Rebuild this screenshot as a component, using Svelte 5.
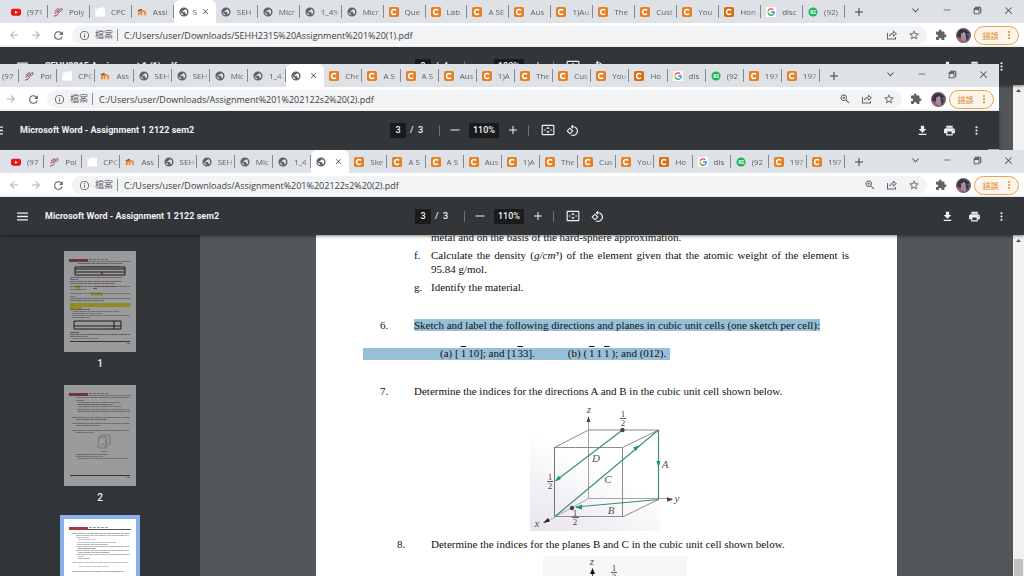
<script>
  const icons = {
    back: 'M20 11H7.83l5.59-5.59L12 4l-8 8 8 8 1.41-1.41L7.83 13H20z',
    forward: 'M4 11h12.17l-5.59-5.59L12 4l8 8-8 8-1.41-1.41L16.17 13H4z',
    reload: 'M17.65 6.35A7.96 7.96 0 0 0 12 4a8 8 0 1 0 7.73 10h-2.08A6 6 0 1 1 12 6c1.66 0 3.14.69 4.22 1.78L13 11h7V4z',
    info: 'M11 7h2v2h-2zm0 4h2v6h-2zm1-9a10 10 0 1 0 0 20 10 10 0 0 0 0-20zm0 18a8 8 0 1 1 0-16 8 8 0 0 1 0 16z',
    zoom: 'M15.5 14h-.79l-.28-.27A6.5 6.5 0 1 0 13.73 14.43l.27.28v.79l5 5L20.5 19zm-6 0a4.5 4.5 0 1 1 0-9 4.5 4.5 0 0 1 0 9zM10.3 7H8.7v1.7H7v1.6h1.7V12h1.6v-1.7H12V8.7h-1.7z',
    share: 'M2 8h2v11h14v-3h2v5H2zM14 3l8 6.5-8 6.5v-4c-4 0-6 1-8.5 4 .8-5 3.5-8.5 8.5-9zm1.5 3.5V8.500C11.500 8.700 9.500 10 8.300 12c2-1 4.200-1.300 7.200-1.300v2L19.500 9.500z',
    star: 'M22 9.24l-7.19-.62L12 2 9.19 8.63 2 9.24l5.46 4.73L5.82 21 12 17.27 18.18 21l-1.63-7.03zM12 15.4l-3.76 2.27 1-4.28-3.32-2.88 4.38-.38L12 6.1l1.71 4.04 4.38.38-3.32 2.88 1 4.28z',
    puzzle: 'M20.5 11H19V7c0-1.1-.9-2-2-2h-4V3.5a2.5 2.5 0 0 0-5 0V5H4c-1.1 0-1.99.9-1.99 2v3.8H3.5c1.49 0 2.7 1.21 2.7 2.7s-1.21 2.7-2.7 2.7H2V20c0 1.1.9 2 2 2h3.8v-1.5c0-1.49 1.21-2.7 2.7-2.7s2.7 1.21 2.7 2.7V22H17c1.1 0 2-.9 2-2v-4h1.5a2.5 2.5 0 0 0 0-5z',
    menu: 'M2 4.5h20v2.5H2zm0 6.2h20v2.5H2zm0 6.3h20v2.5H2z',
    minus: 'M3 11h18v2H3z',
    plus: 'M20 13h-7v7h-2v-7H4v-2h7V4h2v7h7z',
    fit: 'M3 3h18a2 2 0 0 1 2 2v14a2 2 0 0 1-2 2H3a2 2 0 0 1-2-2V5a2 2 0 0 1 2-2zm0 2v14h18V5zM12 6.5l3 3.5H9zM12 17.5L9 14h6zM5 11h3v2H5zm11 0h3v2h-3z',
    rotate: 'M7.34 6.41L.86 12.9l6.49 6.48 6.49-6.48zM3.69 12.9l3.66-3.66L11 12.9l-3.66 3.66zm15.67-6.26A8.95 8.95 0 0 0 13 4V.76L8.76 5 13 9.24V6a7 7 0 1 1-2.84 13.39l-1.49 1.49A9 9 0 0 0 19.36 6.64z',
    download: 'M19 9h-4V3H9v6H5l7 7zM5 18v2.5h14V18z',
    print: 'M19 8H5c-1.66 0-3 1.34-3 3v6h4v4h12v-4h4v-6c0-1.66-1.34-3-3-3zm-3 11H8v-5h8zm3-7a1 1 0 1 1 0-2 1 1 0 0 1 0 2zm-1-9H6v4h12z',
    more: 'M12 8a2 2 0 1 0 0-4 2 2 0 0 0 0 4zm0 2a2 2 0 1 0 0 4 2 2 0 0 0 0-4zm0 6a2 2 0 1 0 0 4 2 2 0 0 0 0-4z',
    chevron: 'M3 7.5L4.5 6l7.5 8 7.5-8L21 7.5l-9 9.5z',
    minimise: 'M2 11h20v2H2z',
    restore: 'M2 6h15v16H2zm2 4v10h11V10zM5 2h14l3 3v14h-2.5V4.5H5z',
    close: 'M21 4.4L19.6 3 12 10.6 4.4 3 3 4.4l7.6 7.6L3 19.6 4.4 21l7.6-7.6 7.6 7.6 1.4-1.4-7.6-7.6z',
    globe: 'M12 1a11 11 0 1 0 0 22 11 11 0 0 0 0-22zm-1 19c-4-.5-7-4-7-8l5 4v1c0 1 1 2 2 2zm7-2.5c-.3-.9-1-1.5-2-1.5h-1v-3c0-.6-.4-1-1-1H8v-2h2c.6 0 1-.4 1-1V7h2c1.1 0 2-.9 2-2v-.4c4 2 6.5 8 3 12.9z'
  };

  const start = [['yt', '(97'], ['poly', 'Pol'], ['doc', 'CPC'], ['moodle', 'Ass'], ['globe', 'SEH'], ['globe', 'SEH'], ['globe', 'Mic'], ['globe', '1_4'], ['globe', '']];
  const rest = [['c', 'A S'], ['c', 'A S'], ['c', 'Aus'], ['c', '1)A'], ['c', 'The'], ['c', 'Cus'], ['c', 'You'], ['cdark', 'Ho'], ['google', 'dis'], ['chat', '(92'], ['c', '197'], ['c', '197']];

  const windows = [
    {
      name: 'first', active: 4, zoomIcon: false,
      url: 'C:/Users/user/Downloads/SEHH2315%20Assignment%201%20(1).pdf',
      title: 'SEHH2315 Assignment 1 (1).pdf', page: 3, pages: 4, zoom: '100%',
      tabs: [['yt', '(971'], ['poly', 'Poly'], ['doc', 'CPC'], ['moodle', 'Assi'], ['globe', 'S'], ['globe', 'SEH'], ['globe', 'Micr'], ['globe', '1_49'], ['globe', 'Micr'], ['c', 'Que'], ['c', 'Lab'], ['c', 'A SE'], ['c', 'Aus'], ['c', '1)Au'], ['c', 'The'], ['c', 'Cust'], ['c', 'You'], ['cdark', 'Hon'], ['google', 'disc'], ['chat', '(92)']]
    },
    {
      name: 'second', active: 8, zoomIcon: true,
      url: 'C:/Users/user/Downloads/Assignment%201%202122s2%20(2).pdf',
      title: 'Microsoft Word - Assignment 1 2122 sem2', page: 3, pages: 3, zoom: '110%',
      tabs: [...start, ['c', 'Che'], ...rest]
    },
    {
      name: 'third', active: 8, zoomIcon: true, document: true,
      url: 'C:/Users/user/Downloads/Assignment%201%202122s2%20(2).pdf',
      title: 'Microsoft Word - Assignment 1 2122 sem2', page: 3, pages: 3, zoom: '110%',
      tabs: [...start, ['c', 'Ske'], ...rest]
    }
  ];

  // text rows of the page previews: [x, y, width, colour]
  const previews = [
    [[14, 12, 44, '#444'], [17, 15, 38, '#333'], [6, 26, 52, '#a33'], [6, 28, 8, '#555'], [6, 30, 52, '#555'], [6, 32, 44, '#555'], [6, 35, 60, '#666'], [30, 35, 22, '#b22'], [29, 37, 4, '#222'], [6, 38, 16, '#666'], [6, 42, 60, '#777'], [6, 45, 6, '#666'], [6, 47, 60, '#666'], [6, 49, 34, '#555'], [6, 58, 20, '#333'], [9, 60, 46, '#777'], [8, 62, 30, '#777'], [8, 64, 58, '#777'], [8, 66, 18, '#777'], [6, 81, 9, '#111'], [6, 83, 60, '#444'], [6, 85, 18, '#666'], [9, 87, 25, '#777'], [63, 92, 3, '#555']],
    [[12, 12, 54, '#666'], [12, 15, 8, '#666'], [14, 17, 42, '#777'], [13, 19, 36, '#555'], [14, 21, 43, '#777'], [13, 24, 53, '#666'], [14, 26, 52, '#666'], [8, 32, 58, '#666'], [12, 34, 31, '#555'], [8, 38, 58, '#666'], [12, 40, 24, '#555'], [8, 45, 57, '#666'], [12, 47, 18, '#777'], [37, 66, 6, '#888'], [12, 69, 32, '#666'], [12, 71, 27, '#777'], [14, 73, 50, '#777'], [63, 92, 3, '#555']],
    [[8, 14, 58, '#777'], [12, 16, 53, '#888'], [12, 18, 14, '#999'], [14, 20, 18, '#999'], [13, 23, 39, '#999'], [13, 25, 31, '#888'], [12, 27, 54, '#888'], [14, 29, 18, '#555'], [12, 31, 53, '#888'], [14, 33, 32, '#777'], [12, 35, 54, '#888'], [14, 37, 6, '#999'], [14, 39, 12, '#888'], [8, 43, 56, '#999'], [15, 47, 30, '#aaa'], [8, 52, 52, '#777']]
  ];
</script>

{#snippet icon(name, size = 12)}
  <svg width={size} height={size} viewBox="0 0 24 24" fill="currentColor" aria-hidden="true"><path d={icons[name]} fill-rule="evenodd" /></svg>
{/snippet}

{#snippet favicon(kind)}
  <svg class="favicon" viewBox="0 0 22 22" aria-hidden="true">
    {#if kind === 'yt'}
      <rect y="4" width="22" height="15" rx="4" fill="#e8141c" /><path d="M9 8l6 3.5-6 3.5z" fill="#fff" />
    {:else if kind === 'poly'}
      <g fill="none" stroke="#96364c" stroke-width="2"><path d="M2 20c5 0 13-5 9-8s-9 1-5 3M10 10c-4-5 1-8 3-5s-2 5 0 6M14 8c1-5 6-6 6-3s-3 5-6 6M4 9l3-2" /></g>
    {:else if kind === 'doc'}
      <rect x="1" y="1" width="21" height="20" fill="#fff" /><path d="M2 2h8M2 5h3" stroke="#bbb" />
    {:else if kind === 'moodle'}
      <path d="M4 18v-5c0-5 6-5 6 0v5m0-5c0-6 8-5 8 0v5" fill="none" stroke="#f08a24" stroke-width="4" /><path d="M0 8l9-4 3 3-9 2z" fill="#575049" />
    {:else if kind === 'globe'}
      <svg viewBox="0 0 24 24" color="#5f6368"><path d={icons.globe} fill="currentColor" fill-rule="evenodd" /></svg>
    {:else if kind === 'google'}
      <rect width="22" height="22" rx="3" fill="#fff" />
      <g fill="none" stroke-width="3"><path d="M16 6A7 7 0 0 0 5 8" stroke="#ea4335" /><path d="M5 8a7 7 0 0 0 0 6" stroke="#fbbc05" /><path d="M5 14a7 7 0 0 0 10 3" stroke="#34a853" /><path d="M15 17q4-2 3-6h-7" stroke="#4285f4" /></g>
    {:else if kind === 'chat'}
      <circle cx="11" cy="11" r="10" fill="#20b35a" /><text x="11" y="15" text-anchor="middle" font-size="11" font-weight="700" fill="#fff">92</text>
    {:else}
      <rect width="22" height="22" rx="4" fill={kind === 'cdark' ? '#dd6c0c' : '#e58123'} /><path d="M15.5 7.5a5.5 5.5 0 1 0 0 7" fill="none" stroke="#fff" stroke-width="3.5" />
    {/if}
  </svg>
{/snippet}

{#snippet barred()}<span class="overbar">1</span>{/snippet}

{#snippet preview(i)}
  <svg class="preview" viewBox="0 0 72 101" aria-hidden="true">
    <rect width="72" height="101" fill="#fff" />
    <path d="M5 10.5h62" stroke="#555" stroke-width={i === 2 ? 1 : 0.5} />
    <rect x="5" y="8" width="19" height="3" fill="#a33a3e" />
    <path d="M25 8.5h20" stroke="#999" stroke-dasharray="3 1" />
    {#if i === 0}
      <path d="M6 52h60v4H18v2H6z" fill="#f0e010" /><path d="M11 36h5M27 43h12" stroke="#e5d820" stroke-width="3" />
      <g fill="none" stroke="#000"><path d="M11 16h50v8H11zM11 18h50M11 21h50M38 21v3M10 70h47v8H10zM10 75h47M50 70v8" /></g>
    {/if}
    {#each previews[i] as [x, y, w, color]}
      <path d="M{x} {y + 0.5}h{w}" stroke={color} stroke-dasharray="5 .4 8 .6 3 .4" opacity="0.6" />
    {/each}
    {#if i === 1}
      <path d="M35 52l4-2h7v9l-4 4h-8zM36 62l8-8M40 62l5-5M35 52h7v10" fill="none" stroke="#888" stroke-width="0.6" />
    {/if}
    {#if i < 2}<path d="M6 90.5h60" stroke="#333" />{/if}
  </svg>
{/snippet}

<main class="desktop">
  {#each windows as w}
    <section class="window {w.name}" aria-label={w.title}>
      <header class="strip">
        <div class="tabs">
          {#each w.tabs as [kind, text], i}
            <div class="tab" class:active={i === w.active}>
              <button class="pick" aria-label={text || w.title}>
                {@render favicon(kind)}
                <span class="name">{text}</span>
              </button>
              {#if i === w.active}
                <button class="shut" aria-label="Close tab">{@render icon('close', 7)}</button>
              {/if}
            </div>
          {/each}
        </div>
        <div class="controls">
          <button class="new" aria-label="New tab">{@render icon('plus', 12)}</button>
          <button aria-label="Search tabs">{@render icon('chevron', 9)}</button>
          <button aria-label="Minimise">{@render icon('minimise', 8)}</button>
          <button aria-label="Restore">{@render icon('restore', 9)}</button>
          <button aria-label="Close">{@render icon('close', 9)}</button>
        </div>
      </header>

      <nav class="address">
        <button class="nav dim" aria-label="Back">{@render icon('back')}</button>
        <button class="nav dim" aria-label="Forward">{@render icon('forward')}</button>
        <button class="nav" aria-label="Reload">{@render icon('reload', 13)}</button>
        <div class="omnibox">
          {@render icon('info', 11)}
          <span class="scheme">檔案</span>
          <input type="text" aria-label="Address" value={w.url} />
          {#if w.zoomIcon}<button aria-label="Zoom">{@render icon('zoom')}</button>{/if}
          <button aria-label="Share">{@render icon('share')}</button>
          <button aria-label="Bookmark">{@render icon('star')}</button>
        </div>
        <button class="nav" aria-label="Extensions">{@render icon('puzzle')}</button>
        <button class="nav" aria-label="Profile">
          <svg width="15" height="15" viewBox="0 0 15 15" aria-hidden="true">
            <circle cx="7.5" cy="7.5" r="7.5" fill="#69616f" />
            <path d="M2 4l3-3 5 1 4 3-3 1-4-1-2 4-4 1z" fill="#3a3440" />
            <path d="M5 5l3 1 3 4-2 4-4-2z" fill="#a48a9c" /><path d="M1 9l3 1 2 4-3-1z" fill="#c05a78" /><path d="M10 6l3 2-2 5-1-3z" fill="#46364a" /><path d="M7 4l2 1-1 3z" fill="#d9c6cc" />
          </svg>
        </button>
        <button class="error">錯誤{@render icon('more', 12)}</button>
      </nav>

      <div class="toolbar">
        <div class="heading">
          <button aria-label="Menu">{@render icon('menu', 13)}</button>
          <h1>{w.title}</h1>
        </div>
        <div class="pager">
          <input class="box" type="text" aria-label="Page number" value={w.page} />
          <span class="total">/&nbsp; {w.pages}</span>
          <span class="rule"></span>
          <button aria-label="Zoom out">{@render icon('minus', 12)}</button>
          <span class="box wide">{w.zoom}</span>
          <button aria-label="Zoom in">{@render icon('plus', 12)}</button>
          <span class="rule"></span>
          <button class="fit" aria-label="Fit to page">{@render icon('fit', 14)}</button>
          <button class="turn" aria-label="Rotate">{@render icon('rotate', 13)}</button>
        </div>
        <div class="actions">
          <button aria-label="Download">{@render icon('download', 13)}</button>
          <button aria-label="Print">{@render icon('print', 13)}</button>
          <button aria-label="More actions">{@render icon('more', 13)}</button>
        </div>
      </div>

      <div class="viewer">
        {#if w.document}
          <aside>
            {#each [0, 1, 2] as i}
              <a class="thumb" class:selected={i === 2} href="#page{i + 1}" aria-label="Page {i + 1}">
                {@render preview(i)}
                {#if i < 2}<span>{i + 1}</span>{/if}
              </a>
            {/each}
          </aside>
        {/if}
        <div class="canvas">
          {#if w.document}
            <article id="page3">
              <div class="sub">
                <p class="item"><span></span><span>metal and on the basis of the hard-sphere approximation.</span></p>
                <p class="item"><span>f.</span><span class="justify">Calculate the density (<i>g/cm³</i>) of the element given that the atomic weight of the element is 95.84 g/mol.</span></p>
                <p class="item"><span>g.</span><span>Identify the material.</span></p>
              </div>
              <p class="question six"><span>6.</span><span><mark>Sketch and label the following directions and planes in cubic unit cells (one sketch per cell):</mark></span></p>
              <p class="cells">
                <span class="part">(a) [{@render barred()}10]; and [1<span class="over3">3</span>3].</span>
                <span class="part">(b) ({@render barred()}1{@render barred()}); and (012).</span>
              </p>
              <p class="question seven"><span>7.</span><span>Determine the indices for the directions A and B in the cubic unit cell shown below.</span></p>
              <svg class="figure" width="190" height="130" viewBox="520 403 190 130" role="img" aria-label="Directions in a cubic unit cell">
                <defs>
                  <linearGradient id="tint" x1="0" y1="1" x2="0.5" y2="0.3">
                    <stop offset="0" stop-color="#e8e3ec" /><stop offset="1" stop-color="#fff" />
                  </linearGradient>
                </defs>
                <rect x="530" y="435" width="130" height="96" fill="url(#tint)" />
                <g fill="none" stroke="#8b8b8b" stroke-width="1">
                  <path d="M588.5 418V498.5H672M588.5 498.5L544 523" stroke="#a9a4a9" />
                  <path d="M588.5 430H658.5L622.5 447.5M588.5 430L554.5 447.5H622.5V517L658.5 499.5M555 516.5H623" />
                  <path d="M554.5 447.5V516.5" stroke="#6b756f" />
                </g>
                <g fill="none" stroke="#3c8f74" stroke-width="1.2">
                  <path d="M658.5 430V499.5L576 507M555 516.5L658.5 430M622.5 430L556 480.5" />
                </g>
                <g fill="#16987a">
                  <path d="M658.5 468l-2-7h4zM575 507.5l7-3v5zM639 445.5l-6 2 3 3.5zM555 481.5l3.5-6 2.5 3.5z" />
                </g>
                <g fill="#444">
                  <path d="M588.5 416l-2 6h4zM673 499.5l-6-2.2v4.4z" /><path d="M543 523l7-1.5-2-3.5z" fill="#222" />
                  <circle cx="622.5" cy="430" r="2.2" /><circle cx="572" cy="508" r="2.2" />
                </g>
                <g class="letters">
                  <text x="589" y="413">z</text><text x="677" y="502">y</text><text x="537" y="527">x</text>
                  <text x="665" y="468">A</text><text x="611" y="514">B</text><text x="608" y="483">C</text><text x="596" y="462">D</text>
                </g>
                <g class="fraction">
                  <text x="623" y="417">1</text><text x="623" y="426">2</text><path d="M620 418.5h6" />
                  <text x="550" y="480">1</text><text x="550" y="489">2</text><path d="M547 481.5h6" />
                  <text x="575" y="516">1</text><text x="575" y="525">2</text><path d="M572 517.5h7" />
                </g>
              </svg>
              <p class="question indent"><span>8.</span><span>Determine the indices for the planes B and C in the cubic unit cell shown below.</span></p>
              <svg class="figure" width="190" height="90" viewBox="520 556 190 90" role="img" aria-label="Planes in a cubic unit cell">
                <rect x="543" y="556" width="144" height="90" fill="#f6f6f6" />
                <path d="M592.5 570v40" stroke="#444" /><path d="M592.5 568l-2.5 6h5z" fill="#111" />
                <g class="letters"><text x="592" y="565">z</text></g>
                <g class="fraction"><text x="614" y="571">1</text><text x="614" y="580">3</text><path d="M611 572.5h6" /></g>
              </svg>
            </article>
          {/if}
        </div>
        <div class="scrollbar">
          <svg width="5" height="3" viewBox="0 0 5 3" aria-hidden="true"><path d="M0 3h5L2.5 0z" fill="#505050" /></svg>
          <span class="grip"></span>
        </div>
      </div>
    </section>
  {/each}
</main>

<style>
  :global(body) { margin: 0; background: #323639; }
  * { box-sizing: border-box; }
  button { display: flex; align-items: center; justify-content: center; padding: 0; border: 0; background: none; color: inherit; font: inherit; }
  input { min-width: 0; padding: 0; border: 0; outline: 0; background: none; color: inherit; font: inherit; }
  svg { display: block; flex: none; }
  p, h1 { margin: 0; }

  .desktop { position: relative; height: 100vh; overflow: hidden; font-family: "Open Sans", "Noto Sans CJK TC", sans-serif; }
  .window { position: absolute; left: 0; top: 0; bottom: 0; width: 100%; display: flex; flex-direction: column; background: #525659; isolation: isolate; }
  .second { left: -25px; top: 64px; }
  .third { top: 150px; }

  .strip { display: flex; height: 23px; background: #dee1e6; color: #3c4043; }
  .tabs { display: flex; flex: 1; min-width: 0; padding-left: 6px; }
  .tab { position: relative; display: flex; flex: 1 1 0; min-width: 0; padding: 0 2px 0 5px; }
  .tab:not(.active)::after { content: ""; position: absolute; right: 0; top: 5px; width: 1px; height: 13px; background: #85898e; }
  .tab.active { background: #fff; border-radius: 6px 6px 0 0; }
  .pick { flex: 1; min-width: 0; justify-content: flex-start; gap: 6px; font-size: 8px; color: #5a5d61; }
  .active .pick { gap: 4px; }
  .shut { flex: none; margin-right: 5px; }
  .favicon { width: 10px; height: 10px; }
  .name { flex: 1; min-width: 0; overflow: hidden; text-align: left; white-space: nowrap; mask-image: linear-gradient(to right, #000 60%, rgba(0, 0, 0, .3)); }
  .controls { display: flex; flex: none; width: 179px; }
  .controls button { width: 31px; height: 20px; }
  .controls .new { width: 28px; height: 23px; margin-right: auto; }

  .address { display: flex; align-items: center; height: 24px; padding: 0 5px 0 3px; background: #fff; color: #5f6368; }
  .nav { flex: none; width: 22px; height: 22px; }
  .dim { color: #b0b2b5; }
  .omnibox { display: flex; align-items: center; flex: 1; min-width: 0; height: 18px; margin: 0 3px; padding: 0 2px 0 7px; border-radius: 9px; background: #f1f3f4; }
  .omnibox button { width: 22px; }
  .omnibox input { flex: 1; height: 18px; padding-left: 6px; font-size: 9px; color: #3c4043; }
  .scheme { flex: none; margin-left: 5px; padding-right: 4px; border-right: 1px solid #8d9195; font-size: 9px; line-height: 12px; }
  .error { flex: none; width: 45px; height: 19px; padding-left: 4px; gap: 4px; border: 1px solid #e2a458; border-radius: 10px; background: #fef5ea; color: #dc8a30; font-size: 8px; }

  .toolbar { display: grid; grid-template-columns: 1fr auto 1fr; align-items: center; flex: none; height: 38px; padding: 0 13px 0 16px; background: #323639; color: #f1f1f1; font: 500 9px Roboto, sans-serif; box-shadow: 0 1px 3px rgba(0, 0, 0, .5); z-index: 1; }
  .heading { display: flex; align-items: center; gap: 16px; min-width: 0; }
  h1 { font-size: 9px; font-weight: 700; white-space: nowrap; }
  .pager { display: flex; align-items: center; margin-right: 8px; }
  .box { width: 16px; height: 15px; background: #191b1c; text-align: center; line-height: 15px; }
  .wide { width: 30px; margin: 0 8px; }
  .total { width: 14px; margin-left: 4px; white-space: nowrap; }
  .rule { width: 1px; height: 11px; margin: 0 9px; background: #6f7275; }
  .total + .rule { margin-left: 15px; }
  .fit { margin-left: 3px; }
  .turn { margin-left: 11px; }
  .actions { display: flex; justify-content: flex-end; gap: 14px; margin-right: 3px; }

  .viewer { display: flex; flex: 1; min-height: 0; }
  aside { display: flex; flex-direction: column; align-items: center; flex: none; width: 200px; padding-top: 16px; overflow: hidden; background: #323639; }
  .thumb { display: flex; flex-direction: column; align-items: center; flex: none; height: 134px; color: #f1f1f1; font: 500 10px Roboto, sans-serif; text-decoration: none; }
  .thumb span { margin-top: 6px; }
  .preview { width: 72px; height: 101px; opacity: .5; }
  .selected { height: auto; margin-top: -4px; border: 4px solid #8ab0ee; }
  .selected .preview { opacity: 1; }
  .canvas { display: flex; justify-content: center; flex: 1; min-width: 0; overflow: hidden; background: #525659; }
  .scrollbar { display: flex; flex-direction: column; align-items: center; flex: none; width: 11px; padding-top: 4px; background: #f1f1f1; }
  .grip { width: 9px; height: 17px; margin-top: auto; background: #c1c1c1; }

  article { flex: 0 1 581px; min-width: 0; background: #fff; color: #111; font: 11px/14px "Liberation Serif", serif; }
  .sub { display: flex; flex-direction: column; gap: 4px; margin: -5px 48px 0 98px; }
  .item { display: grid; grid-template-columns: 17px 1fr; }
  .justify { text-align: justify; }
  mark { background: #98bfd8; color: inherit; }
  .question { display: grid; grid-template-columns: 34px 1fr; padding-left: 64px; white-space: nowrap; }
  .six { margin-top: 24px; }
  .seven { margin-top: 24px; }
  .indent { margin-top: 4px; padding-left: 81px; }
  .cells { display: flex; width: fit-content; height: 12px; margin: 16px 0 0 47px; background: #98bfd8; line-height: 11px; white-space: nowrap; }
  .part { padding: 0 4px 0 77px; }
  .part + .part { padding-left: 29px; }
  .overbar { margin: 0 2px; text-decoration: overline; }
  .over3 { margin-left: 1px; text-decoration: overline; }
  .figure { margin: 5px 0 0 204px; }
  .letters { fill: #555; font: italic 11px "Liberation Serif", serif; text-anchor: middle; }
  .fraction { fill: #444; stroke: none; font: 9px "Liberation Serif", serif; text-anchor: middle; }
  .fraction path { stroke: #555; }
</style>
